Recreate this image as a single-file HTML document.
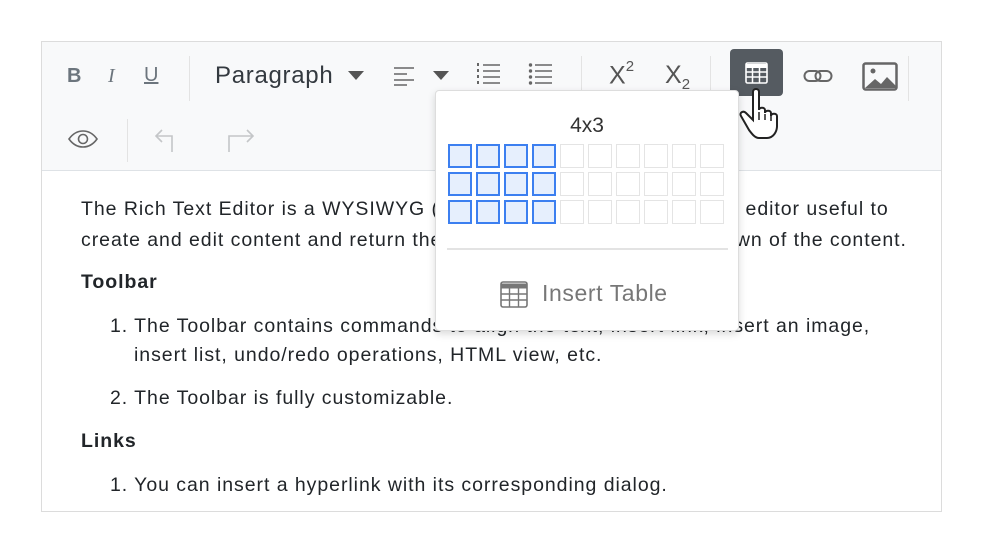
<!DOCTYPE html>
<html><head><meta charset="utf-8"><style>
*{margin:0;padding:0;box-sizing:border-box}
body{width:983px;height:553px;background:#fff;font-family:"Liberation Sans",sans-serif;position:relative;overflow:hidden;color:#212529}
.ed{position:absolute;left:41px;top:41px;width:901px;height:471px;border:1px solid #dcdcdc}
.tb{position:absolute;left:0;top:0;width:899px;height:129px;background:#f8f9fa;border-bottom:1px solid #dee2e6}
.a{position:absolute;white-space:nowrap}
.t{font-size:19.5px;line-height:22px;letter-spacing:0.95px}
.sep{position:absolute;width:1px;background:#e3e3e3}
.pop{position:absolute;left:435px;top:90px;width:304px;height:241px;background:#fff;border:1px solid #ddd;border-radius:4px;box-shadow:0 3px 8px rgba(0,0,0,.15)}
.c{position:absolute;width:24px;height:24px;border:1px solid #e4e4e4}
.c.s{border:2px solid #3c7ff0;background:#e6effd}
</style></head><body>
<div class="ed">
<div class="tb">
 <div class="a" style="left:25px;top:23px;font-size:20px;font-weight:bold;color:#6c757d">B</div>
 <div class="a" style="left:66px;top:23px;font-size:20px;font-style:italic;font-family:'Liberation Serif',serif;color:#6c757d">I</div>
 <div class="a" style="left:102px;top:22px;font-size:20px;text-decoration:underline;color:#6c757d">U</div>
 <div class="sep" style="left:147px;top:14px;height:45px"></div>
 <div class="a" style="left:173px;top:20px;font-size:24px;letter-spacing:0.7px;color:#343a40">Paragraph</div>
 <svg class="a" style="left:305px;top:28px" width="18" height="10"><path d="M1 1h16l-8 9z" fill="#555"/></svg>
 <svg class="a" style="left:351px;top:24px" width="22" height="20"><path d="M1 2h20M1 8h13M1 14h20M1 19h13" stroke="#666" stroke-width="1.6"/></svg>
 <svg class="a" style="left:390px;top:28px" width="18" height="10"><path d="M1 1h16l-8 9z" fill="#555"/></svg>
 <svg class="a" style="left:434px;top:20px" width="26" height="24"><g fill="#666"><rect x="1" y="1" width="2" height="3"/><rect x="1" y="7" width="2" height="3"/><rect x="1" y="13" width="2" height="3"/><rect x="1" y="19" width="2" height="3"/></g><path d="M7 3h17M7 9h17M7 15h17M7 21h17" stroke="#666" stroke-width="1.6"/></svg>
 <svg class="a" style="left:486px;top:20px" width="26" height="24"><g fill="#666"><circle cx="2.5" cy="3" r="1.7"/><circle cx="2.5" cy="9" r="1.7"/><circle cx="2.5" cy="15" r="1.7"/><circle cx="2.5" cy="21" r="1.7"/></g><path d="M7 3h17M7 9h17M7 15h17M7 21h17" stroke="#666" stroke-width="1.6"/></svg>
 <div class="sep" style="left:539px;top:14px;height:45px"></div>
 <div class="a" style="left:567px;top:19px;font-size:25px;color:#555">X<sup style="font-size:15px;position:relative;top:-3px">2</sup></div>
 <div class="a" style="left:623px;top:19px;font-size:25px;color:#555">X<sub style="font-size:15px">2</sub></div>
 <div class="sep" style="left:668px;top:14px;height:45px"></div>
 <div class="a" style="left:688px;top:7px;width:53px;height:47px;background:#555b61;border-radius:4px"></div>
 <svg class="a" style="left:703px;top:20px" width="23" height="22"><rect x="1" y="1" width="21" height="20" rx="1.5" fill="none" stroke="#fff" stroke-width="1.6"/><path d="M1 4h21" stroke="#fff" stroke-width="4"/><path d="M1 10h21M1 15h21M7.5 6v15M14.5 6v15" stroke="#fff" stroke-width="1.5"/></svg>
 <svg class="a" style="left:761px;top:26px" width="30" height="16"><rect x="1.5" y="3" width="16" height="10" rx="5" fill="none" stroke="#666" stroke-width="2"/><rect x="12.5" y="3" width="16" height="10" rx="5" fill="none" stroke="#666" stroke-width="2"/></svg>
 <svg class="a" style="left:820px;top:20px" width="36" height="30"><rect x="1.5" y="1.5" width="33" height="26" rx="2" fill="none" stroke="#666" stroke-width="2.5"/><circle cx="11" cy="9" r="2.5" fill="#666"/><path d="M3 26l10-9 6 5 6-7 9 9v2z" fill="#666"/></svg>
 <div class="sep" style="left:866px;top:14px;height:45px"></div>
 <svg class="a" style="left:26px;top:88px" width="30" height="18"><path d="M1 9C6 2 11 1 15 1s9 1 14 8c-5 7-10 8-14 8S6 16 1 9z" fill="none" stroke="#666" stroke-width="1.6"/><circle cx="15" cy="9" r="4.5" fill="none" stroke="#666" stroke-width="1.6"/></svg>
 <div class="sep" style="left:85px;top:77px;height:43px"></div>
 <svg class="a" style="left:112px;top:86px" width="28" height="26"><path d="M8 2L2 8l6 6M2 8h16v16" fill="none" stroke="#c4c6c8" stroke-width="1.6"/></svg>
 <svg class="a" style="left:185px;top:86px" width="28" height="26"><path d="M20 2l6 6-6 6M26 8H2v16" fill="none" stroke="#c4c6c8" stroke-width="1.6"/></svg>
</div>
<div class="a t" style="left:39px;top:156px">The Rich Text Editor is a WYSIWYG ("what you see is what you get") editor useful to</div>
<div class="a t" style="left:39px;top:187px">create and edit content and return the valid HTML markup or markdown of the content.</div>
<div class="a t" style="left:39px;top:229px;font-weight:bold">Toolbar</div>
<div class="a t" style="left:68px;top:273px">1. The Toolbar contains commands to align the text, insert link, insert an image,</div>
<div class="a t" style="left:92px;top:302px">insert list, undo/redo operations, HTML view, etc.</div>
<div class="a t" style="left:68px;top:345px">2. The Toolbar is fully customizable.</div>
<div class="a t" style="left:39px;top:388px;font-weight:bold">Links</div>
<div class="a t" style="left:68px;top:432px">1. You can insert a hyperlink with its corresponding dialog.</div>
</div>
<div class="pop">
 <div class="a" style="left:0;width:302px;text-align:center;top:23px;font-size:21px;color:#333">4x3</div>
 <div id="g"></div>
 <div class="a" style="left:11px;top:157px;width:281px;height:2px;background:#e3e3e3"></div>
 <svg class="a" style="left:64px;top:190px" width="28" height="27"><rect x="1" y="1" width="26" height="25" rx="2" fill="none" stroke="#777" stroke-width="1.6"/><path d="M1 5h26" stroke="#777" stroke-width="5"/><path d="M1 13h26M1 19h26M9.5 7v19M18.5 7v19" stroke="#777" stroke-width="1.4"/></svg>
 <div class="a" style="left:106px;top:189px;font-size:23px;letter-spacing:0.6px;color:#777">Insert Table</div>
</div>
<svg class="a" style="left:738px;top:86px" width="44" height="56"><path d="M15 6c0-4 6-4 6 0v18c0-3 6-3 6 0v3c0-3 6-3 6 0v3c0-3 6-3 6 0v10c0 6-4 12-10 12h-8c-4 0-7-4-10-8L3 30c-2-3 2-6 5-3l7 7z" fill="#fff" stroke="#222" stroke-width="2"/><path d="M21 26v8M27 28v6M33 30v5" stroke="#222" stroke-width="1.5"/></svg>
<script>
var g=document.getElementById('g'),h='';
for(var r=0;r<3;r++)for(var c=0;c<10;c++){h+='<div class="c'+(c<4?' s':'')+'" style="left:'+(12+c*28)+'px;top:'+(53+r*28)+'px"></div>';}
g.innerHTML=h;
</script>
</body></html>
